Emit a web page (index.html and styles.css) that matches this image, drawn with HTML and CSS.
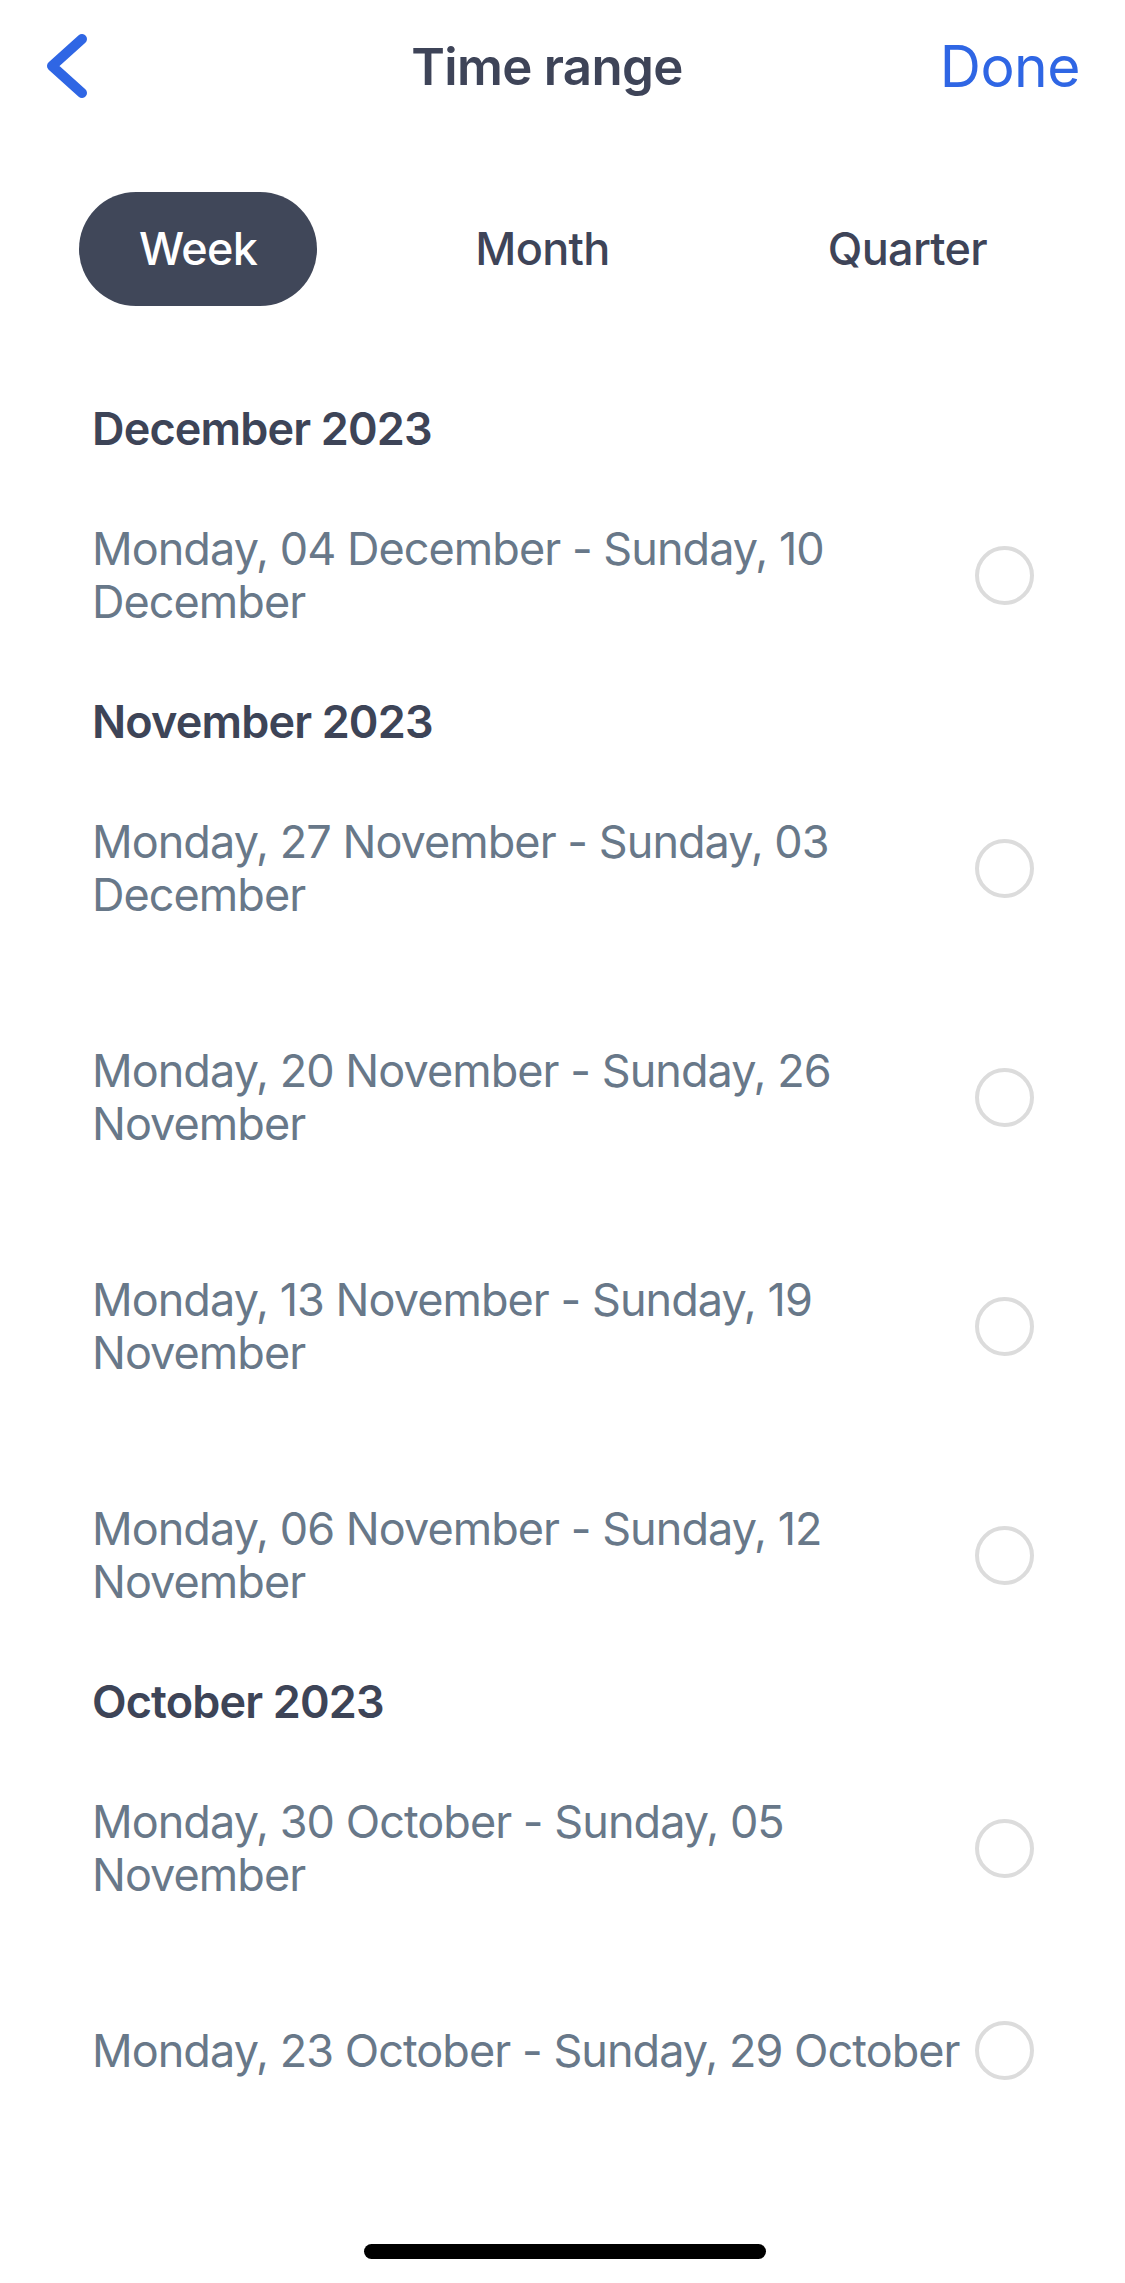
FILE: index.html
```html
<!DOCTYPE html>
<html lang="en">
<head>
<meta charset="utf-8">
<title>Time range</title>
<link rel="stylesheet" href="styles.css">
</head>
<body>
<div class="screen">
  <header class="nav">
    <svg class="back" width="48" height="66" viewBox="0 0 48 66" aria-label="Back">
      <polyline points="40,6 10,33 40,60" fill="none" stroke="#2f66e4" stroke-width="10" stroke-linecap="round" stroke-linejoin="round"/>
    </svg>
    <h1 class="title">Time range</h1>
    <span class="done">Done</span>
  </header>

  <nav class="segments">
    <span class="seg seg-active">Week</span>
    <span class="seg">Month</span>
    <span class="seg">Quarter</span>
  </nav>

  <main class="list">
    <section class="group">
      <h2 class="group-title">December 2023</h2>
      <div class="items">
        <div class="item"><span class="item-text">Monday, 04 December - Sunday, 10 December</span><span class="radio"></span></div>
      </div>
    </section>
    <section class="group">
      <h2 class="group-title">November 2023</h2>
      <div class="items">
        <div class="item"><span class="item-text">Monday, 27 November - Sunday, 03 December</span><span class="radio"></span></div>
        <div class="item"><span class="item-text">Monday, 20 November - Sunday, 26 November</span><span class="radio"></span></div>
        <div class="item"><span class="item-text">Monday, 13 November - Sunday, 19 November</span><span class="radio"></span></div>
        <div class="item"><span class="item-text">Monday, 06 November - Sunday, 12 November</span><span class="radio"></span></div>
      </div>
    </section>
    <section class="group">
      <h2 class="group-title">October 2023</h2>
      <div class="items">
        <div class="item"><span class="item-text">Monday, 30 October - Sunday, 05 November</span><span class="radio"></span></div>
        <div class="item"><span class="item-text">Monday, 23 October - Sunday, 29 October</span><span class="radio"></span></div>
      </div>
    </section>
  </main>

  <div class="home-indicator"></div>
</div>
</body>
</html>
```

FILE: styles.css
```css
* {
  box-sizing: border-box;
}

html, body {
  margin: 0;
  padding: 0;
  background: #ffffff;
}

body {
  font-family: Inter, "Noto Sans", "Liberation Sans", sans-serif;
  -webkit-font-smoothing: antialiased;
}

.screen {
  position: relative;
  width: 1125px;
  min-height: 2283px;
  overflow: hidden;
  background: #ffffff;
}

/* Navigation bar */
.nav {
  height: 132px;
  display: grid;
  grid-template-columns: 1fr auto 1fr;
  align-items: center;
  padding: 0 45px 0 42px;
}

.back {
  display: block;
  justify-self: start;
}

.title {
  margin: 0 28px 0 0;
  font-size: 51px;
  font-weight: 600;
  color: #3e4458;
  letter-spacing: -0.7px;
}

.done {
  justify-self: end;
  font-size: 57px;
  font-weight: 400;
  color: #2f66e4;
  letter-spacing: -0.5px;
}

/* Segmented selector */
.segments {
  margin-top: 60px;
  display: flex;
  justify-content: space-between;
  padding: 0 78px 0 79px;
}

.seg {
  height: 114px;
  line-height: 114px;
  padding: 0 60px;
  border-radius: 57px;
  font-size: 45px;
  font-weight: 500;
  color: #3e4458;
  letter-spacing: -0.7px;
}

.seg-active {
  background: #404759;
  color: #ffffff;
}

/* List */
.list {
  margin-top: 96px;
  padding: 0 91px 0 92px;
  display: flex;
  flex-direction: column;
  gap: 67px;
}

.group-title {
  margin: 0 0 67px 0;
  font-size: 45px;
  line-height: 53px;
  font-weight: 600;
  color: #3d4457;
  letter-spacing: -0.85px;
}

.items {
  display: flex;
  flex-direction: column;
  gap: 123px;
}

.item {
  display: flex;
  align-items: center;
}

.item-text {
  flex: 1;
  font-size: 45px;
  line-height: 53px;
  font-weight: 400;
  color: #687889;
  letter-spacing: -0.95px;
}

.radio {
  flex-shrink: 0;
  width: 59px;
  height: 59px;
  margin: -3px 0;
  border: 4px solid #dcdcdc;
  border-radius: 50%;
}

/* Home indicator overlay */
.home-indicator {
  position: absolute;
  left: 50%;
  bottom: 24px;
  width: 402px;
  height: 15px;
  margin-left: -199px;
  border-radius: 8px;
  background: #000000;
}
```
